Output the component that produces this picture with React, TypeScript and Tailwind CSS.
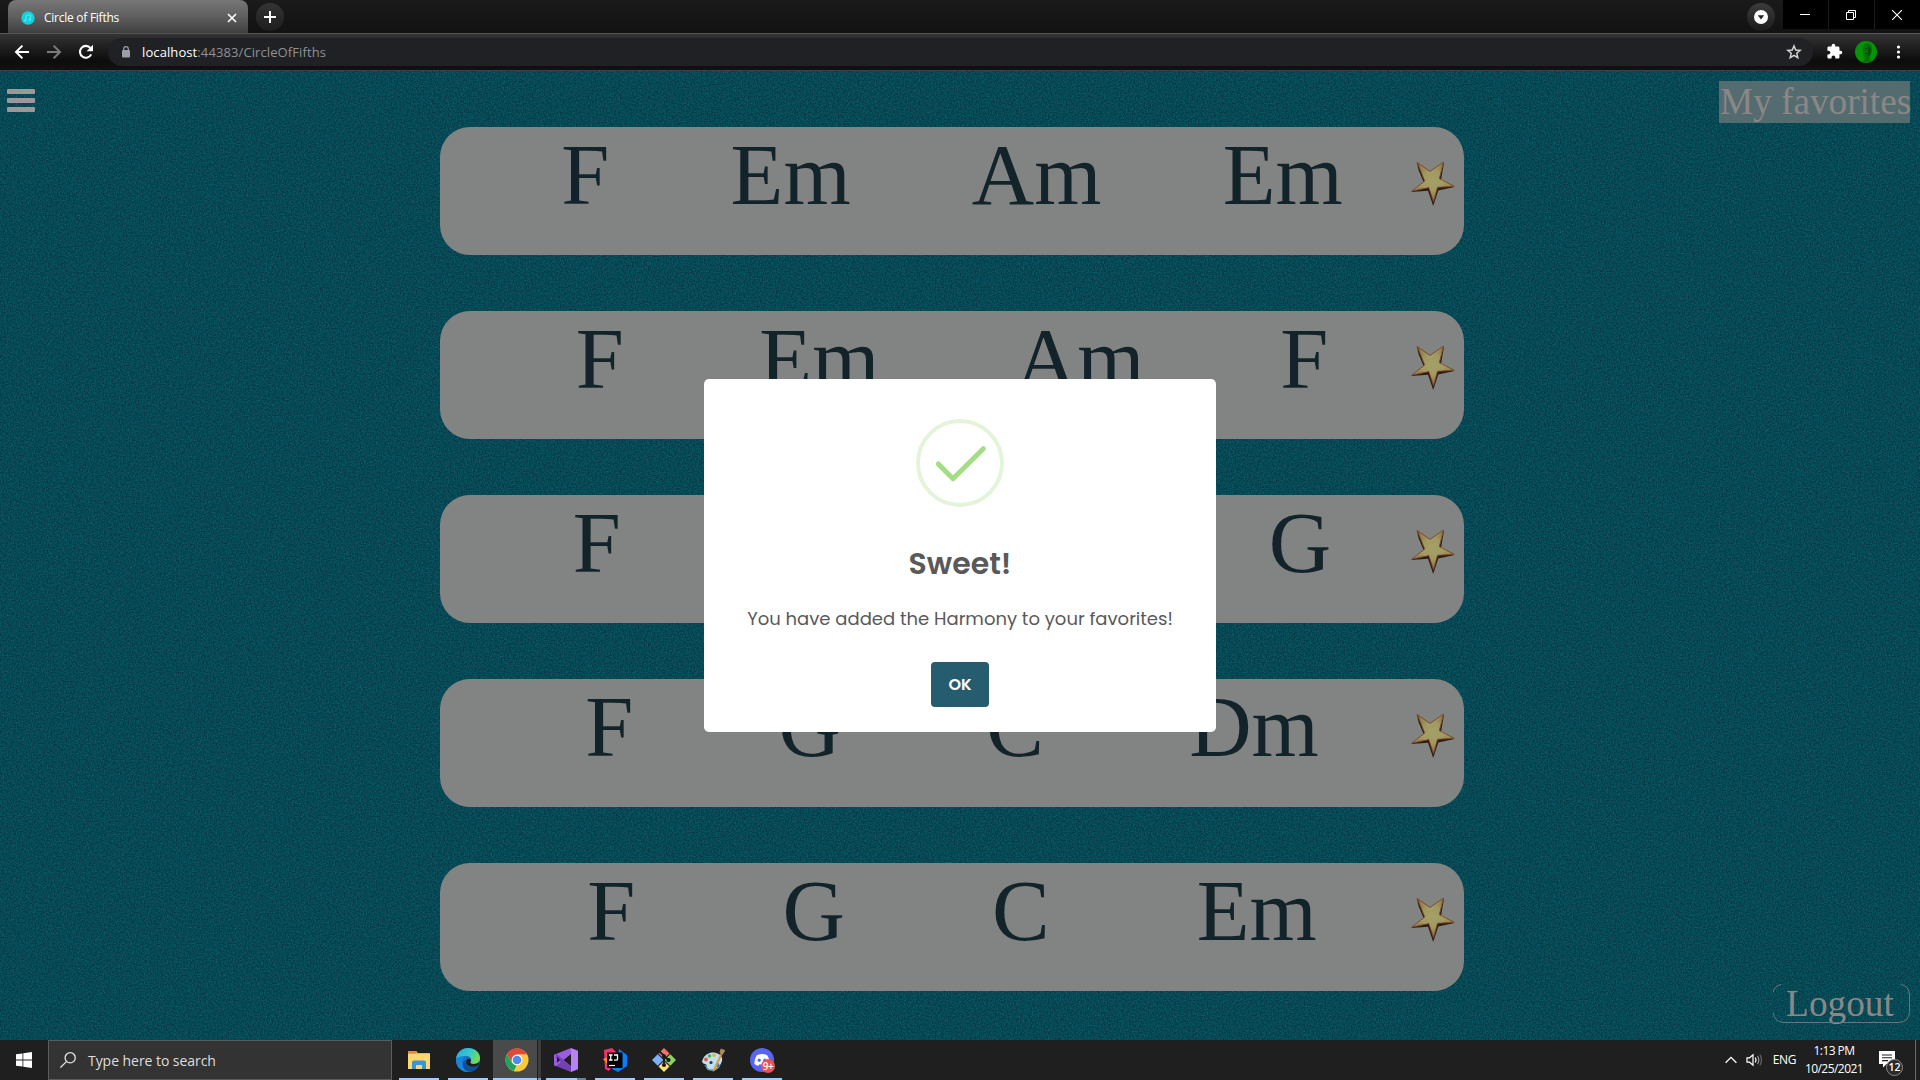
import type { ReactNode } from "react";

const SANS = "font-['Open_Sans',sans-serif]";
const SERIF = "font-['Liberation_Serif',serif]";

const harmonies: string[][] = [
  ["F", "Em", "Am", "Em"],
  ["F", "Em", "Am", "F"],
  ["F", "Em", "Am", "G"],
  ["F", "G", "C", "Dm"],
  ["F", "G", "C", "Em"],
];

function TabStrip() {
  return (
    <div className="flex h-[33px] items-start bg-linear-to-b from-[#1a1a1a] to-[#121212]">
      <div className="ml-2 flex h-[33px] w-60 items-center rounded-t-lg bg-linear-to-b from-[#777777] via-[#5f5f5f] via-50% to-[#3f3f3f] pt-[2px] pr-[11px] pl-[13px]">
        <svg className="size-[14px]" viewBox="0 0 14 14">
          <circle cx="7" cy="7" r="6.7" fill="#12d0dc" />
          <path d="M5 9.6V4.6l4.6-1v5" fill="none" stroke="#5fe6ea" strokeWidth="1" />
          <circle cx="4.2" cy="9.6" r="1.1" fill="#5fe6ea" />
          <circle cx="8.8" cy="8.7" r="1.1" fill="#5fe6ea" />
        </svg>
        <span className={"ml-[9px] grow text-[12px] leading-4 tracking-[-0.26px] text-white " + SANS}>Circle of Fifths</span>
        <svg className="size-[10px]" viewBox="0 0 10 10" stroke="#fff" strokeWidth="1.6">
          <path d="M1 1l8 8M9 1l-8 8" />
        </svg>
      </div>
      <div className="mt-[3px] ml-2 flex size-7 items-center justify-center rounded-full bg-linear-to-b from-[#343434] to-[#1e1e1e]">
        <svg className="size-3" viewBox="0 0 12 12" stroke="#fff" strokeWidth="2">
          <path d="M6 0v12M0 6h12" />
        </svg>
      </div>
      <div className="grow" />
      <div className="mt-[3px] mr-2 flex size-7 items-center justify-center rounded-full bg-linear-to-b from-[#3c3c3c] to-[#1c1c1c]">
        <svg className="size-[14px]" viewBox="0 0 14 14">
          <circle cx="7" cy="7" r="7" fill="#fff" />
          <path d="M3.8 5.2h6.4L7 9.6z" fill="#222" />
        </svg>
      </div>
      <div className="flex h-[29px] gap-px bg-[#1b1b1b] text-white">
        <div className="flex w-[45px] items-center justify-center bg-black pr-px">
          <svg className="size-[10px]" viewBox="0 0 10 10" stroke="currentColor"><path d="M0 4.5h10" /></svg>
        </div>
        <div className="flex w-[45px] items-center justify-center bg-black pr-px">
          <svg className="size-[10px]" viewBox="0 0 10 10" fill="none" stroke="currentColor">
            <path d="M.5 2.5h7v7h-7zM2.5 2.5v-2h7v7h-2" />
          </svg>
        </div>
        <div className="flex w-[45px] items-center justify-center bg-black pr-[2px]">
          <svg className="size-[10px]" viewBox="0 0 10 10" stroke="currentColor" strokeWidth="1.1"><path d="M0 0l10 10M10 0L0 10" /></svg>
        </div>
      </div>
    </div>
  );
}

function AddressBar() {
  return (
    <div className="flex h-[38px] items-center border-t border-b border-t-[#555555] border-b-[#414141] bg-linear-to-b from-[#343434] from-0% via-[#0c0c0c] via-75% to-[#121212] pb-px">
      <svg className="ml-[14px] size-4" viewBox="0 0 16 16" fill="none" stroke="#fff" strokeWidth="2"><path d="M15 8H2.4M8.4 1.6L2 8l6.4 6.4" /></svg>
      <svg className="ml-4 size-4" viewBox="0 0 16 16" fill="none" stroke="#7c7c7c" strokeWidth="2"><path d="M1 8h12.6M7.6 1.6L14 8l-6.4 6.4" /></svg>
      <svg className="ml-4 size-4" viewBox="0 0 16 16">
        <path d="M13.2 10.4A5.9 5.9 0 1 1 12.4 4" fill="none" stroke="#fff" strokeWidth="2.1" />
        <path d="M15 .8v6.4H8.6z" fill="#fff" />
      </svg>
      <div className="ml-[14px] flex h-7 grow items-center rounded-full bg-[#202124] pr-[11px] pl-[14px]">
        <svg className="h-[12px] w-[8px] shrink-0" viewBox="0 0 8 12">
          <rect y="4" width="8" height="7.6" rx="1" fill="#9aa0a6" />
          <path d="M1.7 4.5V3a2.3 2.3 0 0 1 4.6 0v1.5" fill="none" stroke="#9aa0a6" strokeWidth="1.2" />
        </svg>
        <div className={"ml-3 grow text-[13px] leading-5 tracking-[0.1px] text-[#8e9196] " + SANS}>
          <span className="text-white">localhost</span>:44383/CircleOfFifths
        </div>
        <svg className="size-4" viewBox="0 0 16 16" fill="none" stroke="#d2d2d2" strokeWidth="1.5">
          <path d="M8 1.9l1.75 4.1 4.4.4-3.35 2.9 1 4.35L8 11.3l-3.8 2.35 1-4.35L1.85 6.4l4.4-.4z" />
        </svg>
      </div>
      <svg className="ml-[13px] size-[17px]" viewBox="0 0 24 24" fill="#fff">
        <path d="M20.500 11H19V7c0-1.100-.9-2-2-2h-4V3.500a2.500 2.500 0 0 0-5 0V5H4c-1.100 0-2 .9-2 2v3.800h1.500c1.500 0 2.700 1.200 2.700 2.700S5 16.200 3.500 16.200H2V20c0 1.100.9 2 2 2h3.800v-1.500c0-1.500 1.200-2.700 2.700-2.700s2.700 1.200 2.700 2.700V22H17c1.100 0 2-.9 2-2v-4h1.500a2.500 2.500 0 0 0 0-5z" />
      </svg>
      <svg className="ml-3 size-[22px]" viewBox="0 0 22 22">
        <circle cx="11" cy="11" r="11" fill="#059405" />
        <path d="M9 3.500c2-2 6.500-1.500 7.600 1.500.7 2.600.4 5-.4 7.500-.7 2.300-1.500 3.600-1.200 5.500l1.500 2.600A11 11 0 0 1 7 21c1.500-1.500 2.700-2.600 2.800-4.200C7.500 14 7 7 9 3.500z" fill="#067209" />
        <path d="M13 5.500c2.600-.3 3.300 2.500 2.800 5.500-.4 2.600-1.500 4.500-3 4.600z" fill="#044d06" />
        <path d="M10 7.500h2M10.300 12.500h2.500" stroke="#033d05" />
      </svg>
      <svg className="mr-[14px] ml-[14px] h-4 w-[15px]" viewBox="0 0 15 16" fill="#fff">
        <circle cx="7.500" cy="3" r="1.600" /><circle cx="7.500" cy="8" r="1.600" /><circle cx="7.500" cy="13" r="1.600" />
      </svg>
    </div>
  );
}

function Grain() {
  return (
    <svg className="absolute inset-0 size-full">
      <filter id="grain" x="0" y="0" width="100%" height="100%" colorInterpolationFilters="sRGB">
        <feTurbulence type="fractalNoise" baseFrequency="0.68" numOctaves="3" seed="4" />
        <feColorMatrix values="0.04 0 0 0 0.009  0.25 0 0 0 0.160  0.26 0 0 0 0.204  0 0 0 0 1" />
      </filter>
      <rect width="100%" height="100%" filter="url(#grain)" />
    </svg>
  );
}

function StarButton() {
  return (
    <svg className="absolute top-[33px] right-[8px] h-[47px] w-[46px]" viewBox="0 0 46 47">
      <defs>
        <radialGradient id="gold" cx="0.5" cy="0.48" r="0.5">
          <stop offset="0" stopColor="#a5a069" />
          <stop offset="0.5" stopColor="#a19a62" />
          <stop offset="1" stopColor="#8e7242" />
        </radialGradient>
      </defs>
      <path d="M6.800 2.300L8.500 10 13.500 22 1.200 32 18 30.800 23.200 46 28.300 30.500 44.500 27 31 20 34 2.500 21 13z" fill="#27140f" opacity=".92" />
      <path d="M7.300 2.500L20 11.500 33.600 2 29.300 18.600 44.200 26.200 27.500 27.300 23.500 41.500 18.800 27.500 1.800 31.200 14.700 21z" fill="url(#gold)" stroke="#7a4d22" strokeWidth=".9" strokeLinejoin="round" />
      <path d="M10 6L20 13.500l10.600-8M30.300 20.500l9 5M5.500 29.300l12-8" fill="none" stroke="#bda96e" strokeWidth=".7" opacity=".6" />
    </svg>
  );
}

function HarmonyCard({ chords }: { chords: string[] }) {
  return (
    <div className={"relative flex h-32 w-[1024px] justify-evenly rounded-[30px] bg-[#828483] text-[86.4px] leading-[96px] text-[#12242a] " + SERIF}>
      {chords.map((chord, i) => (
        <span key={i}>{chord}</span>
      ))}
      <StarButton />
    </div>
  );
}

function Dialog() {
  return (
    <div className="absolute top-[308px] left-[704px] flex h-[353px] w-[512px] flex-col items-center rounded-[5px] bg-white pt-10 font-['Poppins',Inter,sans-serif] text-[#595959]">
      <svg className="size-[88px]" viewBox="0 0 88 88" fill="none">
        <circle cx="44" cy="44" r="42" stroke="#e4f4db" strokeWidth="4" />
        <path d="M22.300 45L37 59.700 67.300 29.700" stroke="#a5dc86" strokeWidth="5" strokeLinecap="round" strokeLinejoin="round" />
      </svg>
      <h2 className="mt-[37px] text-[30px] leading-10 font-semibold">Sweet!</h2>
      <p className="mt-[21px] text-[18px] leading-7 font-normal">You have added the Harmony to your favorites!</p>
      <button className="mt-[29px] h-[45px] w-[58px] rounded-[4px] bg-[#265d6e] text-[16px] font-semibold text-white">OK</button>
    </div>
  );
}

function Page() {
  return (
    <main className={"relative h-[969px] overflow-hidden bg-[#074855] " + SERIF}>
      <Grain />
      <div className="relative flex h-full justify-between">
        <div className="mt-[18px] ml-[7px] flex w-7 flex-col gap-1">
          <div className="h-[5px] rounded-[1px] bg-[#9b9899]" />
          <div className="h-[5px] rounded-[1px] bg-[#9b9899]" />
          <div className="h-[5px] rounded-[1px] bg-[#9b9899]" />
        </div>
        <div className="ml-[405px] flex flex-col gap-14 pt-14">
          {harmonies.map((chords, i) => (
            <HarmonyCard key={i} chords={chords} />
          ))}
        </div>
        <div className="mr-[10px] flex grow flex-col items-end justify-between pt-[10px] pb-[17px] text-[37.33px] text-[#8a8786]">
          <div className="h-[42px] w-[191px] bg-[#546c70] pl-px leading-[41px] tracking-[-0.05px] whitespace-nowrap">My favorites</div>
          <button className="relative h-[39px] w-[137px] pr-[3px] leading-[40px]">
            <svg className="absolute inset-0 size-full" viewBox="0 0 137 39" fill="none" stroke="#64797c">
              <path d="M.5 8V7Q2 2 8 .5M.5 29Q1 37 10 38.500H126Q136 38 136.500 28V11Q136 2 128 .5" />
            </svg>
            Logout
          </button>
        </div>
      </div>
      <Dialog />
    </main>
  );
}

function ExplorerIcon() {
  return (
    <svg className="size-6" viewBox="0 0 24 24">
      <path d="M1 3h8l2 2h12v16H1z" fill="#f0b73a" />
      <path d="M1 6h22v15H1z" fill="#fdd86c" />
      <path d="M1 3h8.500v2.500H1z" fill="#d99a1b" />
      <path d="M5 21v-6.500a2 2 0 0 1 2-2h10a2 2 0 0 1 2 2V21h-4v-4H9v4z" fill="#3c94d6" />
    </svg>
  );
}

function EdgeIcon() {
  return (
    <svg className="size-6" viewBox="0 0 24 24">
      <defs>
        <linearGradient id="edgeTop" x1="0" y1="0" x2="1" y2="0.4">
          <stop offset="0" stopColor="#2aa9e0" /><stop offset="0.55" stopColor="#35c5d0" /><stop offset="1" stopColor="#6fdc5a" />
        </linearGradient>
      </defs>
      <circle cx="12" cy="12" r="12" fill="#1072c8" />
      <path d="M0 11C1 4 6 0 12 0c7 0 12 4.500 12 10 0 4-3 6-6.500 6-3 0-3.800-1.200-2.800-2.500C16 11.500 14.500 8 10.500 8 6 8 2 9 0 11z" fill="url(#edgeTop)" />
      <path d="M8.500 9C3.500 13.500 7 23 14 23.800 8 25 0 20.500 0 12c2-3 5-3.700 8.500-3z" fill="#1b86d8" />
      <path d="M9.500 12c-1.500 6 6 9.500 13 5.500-2 4-6 6.300-9.500 6.200-6-1-8.500-8-3.500-11.700z" fill="#0d4f9b" />
      <path d="M14.700 13.500c-1 1.300-.2 2.500 2.800 2.500 2.500 0 4.500-.8 5.500-2 .3 1-.1 2.300-.6 3.300-6 3.300-12.500.7-12.400-3.300.1-2 1.500-3.400 3-3.500 1.500.3 2.500 1.700 1.700 3z" fill="#1f1f1f" />
    </svg>
  );
}

function ChromeIcon() {
  return (
    <svg className="size-6" viewBox="0 0 24 24">
      <circle cx="12" cy="12" r="11.500" fill="#fbc940" />
      <path d="M2 6.300A11.500 11.500 0 0 1 22 6.300H12z" fill="#dc4a3d" />
      <path d="M2 6.300A11.500 11.500 0 0 1 12 .5l.5 6.200L7 14.500z" fill="#dc4a3d" />
      <path d="M2 6.300L7 15l4.500 2.300-2.600 5.800A11.500 11.500 0 0 1 2 6.300z" fill="#20a261" />
      <circle cx="12" cy="12" r="5.400" fill="#fff" />
      <circle cx="12" cy="12" r="4.300" fill="#4a8af4" />
    </svg>
  );
}

function VisualStudioIcon() {
  return (
    <svg className="size-6" viewBox="0 0 24 24">
      <path d="M0 7l2-1.300L17 18v6L.7 17.500 0 17z" fill="#7540b5" />
      <path d="M0 7v10l2 1.300L17 6V0L.7 6.500z" fill="#9a5de0" />
      <path d="M2 5.700L17 18v6L2 9.500z" fill="#7540b5" />
      <path d="M3 9v6l3-3z" fill="#1f1f1f" />
      <path d="M17 7l-6.500 5 6.500 5z" fill="#1f1f1f" />
      <path d="M3.500 16.900L8.800 13.500 16 20v3z" fill="#1f1f1f" opacity="0" />
      <path d="M17 0l7 2.800v18.400L17 24z" fill="#b583f2" />
    </svg>
  );
}

function IntelliJIcon() {
  return (
    <svg className="size-6" viewBox="0 0 24 24">
      <path d="M1 2L9 0l6 6-5 10-4 7-4-2z" fill="#f5316b" />
      <path d="M0 11l5-2v8z" fill="#fb8a1e" />
      <path d="M16 1l8 6v11l-9 6-6-3 5-10z" fill="#0f7bf5" />
      <rect x="4" y="4.500" width="15.500" height="15.500" fill="#000" />
      <path d="M6 7h3.500M7.750 7v5M6 12h3.500M11 7h3.500v4q0 1.200-1.200 1.200H11" fill="none" stroke="#fff" strokeWidth="1.300" />
      <path d="M6 17.500h6" stroke="#fff" strokeWidth="1.200" />
    </svg>
  );
}

function GitIcon() {
  return (
    <svg className="size-6" viewBox="0 0 24 24">
      <path d="M6.500 5.500L12 0l5.500 5.500L12 11z" fill="#f0736f" />
      <path d="M5.700 6.300L11.400 12l-5.700 5.700L0 12z" fill="#7db0fb" />
      <path d="M18.300 6.300L24 12l-5.700 5.700-5.700-5.700z" fill="#8cd360" />
      <path d="M12 13l5.500 5.500L12 24l-5.500-5.500z" fill="#fbe178" />
      <path d="M7.500 3.500L16.500 12M12 8v9" stroke="#1a1a1a" strokeWidth="1.800" />
      <circle cx="12" cy="17" r="2.100" fill="#1a1a1a" /><circle cx="16.500" cy="12" r="2.100" fill="#1a1a1a" /><circle cx="12" cy="8.200" r="2" fill="#1a1a1a" />
    </svg>
  );
}

function PaintIcon() {
  return (
    <svg className="size-6" viewBox="0 0 24 24">
      <path d="M2 11C4 6 10 3.500 15 5c6 1.500 7.500 6 5 10.500S12 23 7 20.500c-2-1-.5-3-2-4S-.5 15.500 2 11z" fill="#bfe0ee" />
      <path d="M3 17c4 0 2 3.500 5 4 5 1 10-1 12-5-2 6-8 8-13 6-2-1-1-3-4-5z" fill="#7fb2cc" />
      <circle cx="5" cy="11.500" r="1.900" fill="#e5574c" /><circle cx="8.500" cy="8" r="1.800" fill="#5aa84e" />
      <circle cx="13" cy="7.200" r="1.800" fill="#e9b13a" /><circle cx="10" cy="14.500" r="1.600" fill="#1f3b55" /><circle cx="16.500" cy="17" r="1.900" fill="#3877d2" />
      <path d="M19.500 6l1.800.6L14 22.500l-2.300 1.200.5-2.600z" fill="#e09a3e" />
      <path d="M19 5.500C18 3 20 2.500 19.500.5L24 2c0 2-1.500 2.500-2 4.800z" fill="#b08a5c" />
    </svg>
  );
}

function DiscordIcon() {
  return (
    <div className="relative size-6">
      <svg className="size-6" viewBox="0 0 24 24">
        <circle cx="12" cy="12" r="12" fill="#5865f2" />
        <path d="M8.600 6.500Q12 5.700 15.400 6.500L17.200 7.300Q20 11.500 19.500 16q-2 1.500-4 1.800l-1-1.600q-2.500.6-5 0l-1 1.600q-2-.3-4-1.800Q4 11.500 6.800 7.300z" fill="#fff" />
        <ellipse cx="9.200" cy="12.300" rx="1.600" ry="1.800" fill="#5865f2" /><ellipse cx="14.800" cy="12.300" rx="1.600" ry="1.800" fill="#5865f2" />
      </svg>
      <div className={"absolute top-[11px] left-[11px] flex size-[14px] items-center justify-center rounded-full bg-[#ee5054] text-[10px] leading-none font-semibold tracking-[-0.4px] text-white " + SANS}>9+</div>
    </div>
  );
}

function TaskButton({ children }: { children: ReactNode }) {
  return (
    <div className="flex h-10 w-10 flex-col items-center justify-between border-b-2 border-[#9ccffb] pt-2">
      {children}
    </div>
  );
}

function Taskbar() {
  return (
    <footer className={"flex h-10 items-center bg-[#1f1f1f] text-white " + SANS}>
      <svg className="ml-4 size-4" viewBox="0 0 16 16" fill="#fff">
        <path d="M0 2.300L6.500 1.400v6.200H0zM7.300 1.300L16 0v7.600H7.300zM0 8.400h6.500v6.200L0 13.700zM7.300 8.400H16V16l-8.700-1.300z" />
      </svg>
      <div className="ml-4 flex h-10 w-[344px] items-center border border-[#5c5c5c] bg-[#333333] pl-[11px]">
        <svg className="size-4" viewBox="0 0 16 16" fill="none" stroke="#e6e6e6" strokeWidth="1.300">
          <circle cx="10.200" cy="5.800" r="5.100" /><path d="M6.400 9.600L.4 15.600" />
        </svg>
        <span className="ml-3 pt-[2px] text-[14px] leading-5 tracking-[-0.05px] text-[#dedede]">Type here to search</span>
      </div>
      <div className="ml-[7px] flex grow gap-[9px]">
        <TaskButton><ExplorerIcon /></TaskButton>
        <TaskButton><EdgeIcon /></TaskButton>
        <div className="-mr-1 -ml-1 flex">
          <div className="flex h-10 w-11 flex-col items-center border-b-2 border-[#9ccffb] bg-[#4a4a4a] pt-2 pl-1"><ChromeIcon /></div>
          <div className="ml-px h-10 w-[3px] border-b-2 border-[#7598b5] bg-[#3c3c3c]" />
        </div>
        <div className="flex">
          <div className="flex h-10 w-[31px] flex-col border-b-2 border-[#9ccffb] pt-2 pl-2"><VisualStudioIcon /></div>
          <div className="h-10 w-[9px] border-b-2 border-[#6585a0]" />
        </div>
        <TaskButton><IntelliJIcon /></TaskButton>
        <TaskButton><GitIcon /></TaskButton>
        <TaskButton><PaintIcon /></TaskButton>
        <TaskButton><DiscordIcon /></TaskButton>
      </div>
      <svg className="size-3" viewBox="0 0 12 12" fill="none" stroke="#fff" strokeWidth="1.300"><path d="M.6 8.800L6 3.400l5.400 5.400" /></svg>
      <svg className="ml-[9px] h-4 w-[17px]" viewBox="0 0 17 16" fill="none" stroke="#fff" strokeWidth="1.200">
        <path d="M1 5.800h2.600L7 2.800v10.400l-3.400-3H1z" />
        <path d="M9.300 5.600q1.500 2.400 0 4.800" /><path d="M11.500 4q2.600 4 0 8" stroke="#999" /><path d="M13.800 2.500q3.400 5.500 0 11" stroke="#666" />
      </svg>
      <span className="ml-[10px] text-[12px] leading-4 tracking-[-0.4px]">ENG</span>
      <div className="ml-[7px] flex w-[62px] flex-col items-center text-[12px] leading-[18px] tracking-[-0.55px]">
        <span>1:13 PM</span>
        <span>10/25/2021</span>
      </div>
      <div className="relative ml-[14px] size-6">
        <svg className="absolute top-[3px] left-0 h-[17px] w-4" viewBox="0 0 16 17">
          <path d="M0 0h16v13H7.500L4 16.500V13H0z" fill="#fff" />
          <path d="M3 4h10M3 6.800h10M3 9.600h6" stroke="#1f1f1f" strokeWidth="1.100" />
        </svg>
        <div className="absolute top-[11px] left-[7px] flex size-[17px] items-center justify-center rounded-full border border-[#8a8a8a] bg-[#2b2b2b] text-[10.5px] leading-none font-semibold">12</div>
      </div>
      <div className="mr-1 ml-[12px] h-10 w-px bg-[#6a6a6a]" />
    </footer>
  );
}

export default function App() {
  return (
    <div className="flex h-[1080px] w-[1920px] flex-col overflow-hidden">
      <TabStrip />
      <AddressBar />
      <Page />
      <Taskbar />
    </div>
  );
}
